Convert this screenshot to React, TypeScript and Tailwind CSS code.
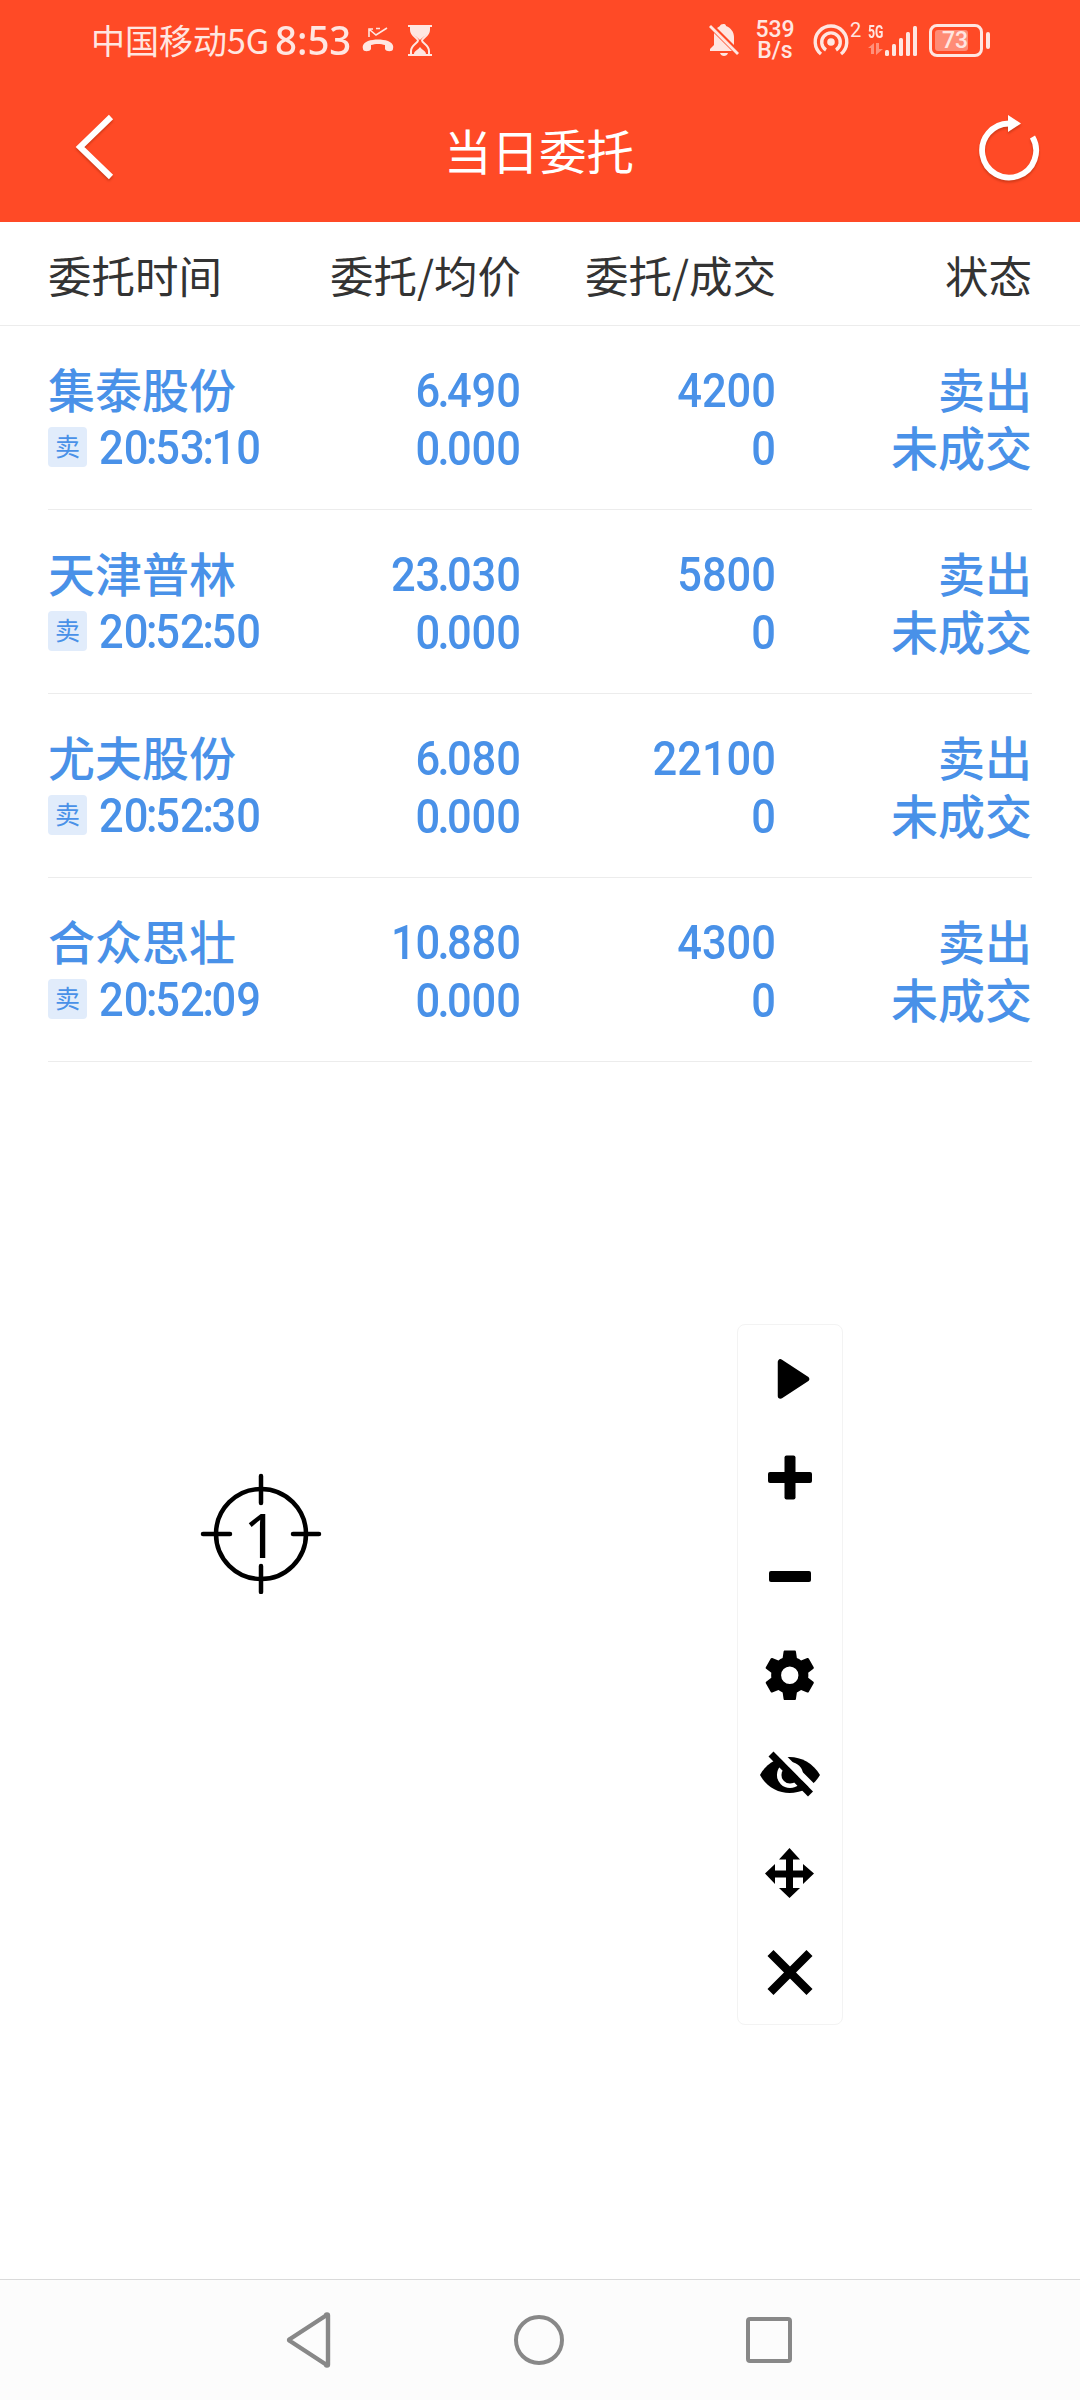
import React from "react";

type Order = { name: string; time: string; price: string; avg: string; qty: string };

const orders: Order[] = [
  { name: "集泰股份", time: "20:53:10", price: "6.490", avg: "0.000", qty: "4200" },
  { name: "天津普林", time: "20:52:50", price: "23.030", avg: "0.000", qty: "5800" },
  { name: "尤夫股份", time: "20:52:30", price: "6.080", avg: "0.000", qty: "22100" },
  { name: "合众思壮", time: "20:52:09", price: "10.880", avg: "0.000", qty: "4300" },
];

function StatusBar() {
  return (
    <div className="flex h-20 items-center pl-[91px] pr-[90px] text-[#ffe6e1]">
      <span className="w-[184px] whitespace-nowrap text-[34px] leading-[78px]">中国移动5G</span>
      <span className="w-[77px] origin-left scale-x-[0.960] whitespace-nowrap font-['Noto_Sans','Noto_Sans_CJK_SC',sans-serif] text-[40px] font-medium leading-[80px]">8:53</span>
      <svg className="ml-[10px] h-[26px] w-8" viewBox="0 0 32 26" fill="none" stroke="currentColor">
        <path d="M7 10V2h4M8 3l6 5L25 1M14 1.500h4" strokeWidth="1.600" />
        <path d="M1 22c-1-4 1-6 5-8 6-2 14-2 20 0 4 2 6 4 5 8 0 3-7 3-8 0v-4c-4-1.500-10-1.500-14 0v4c-1 3-8 3-8 0Z" fill="currentColor" stroke="none" />
      </svg>
      <svg className="ml-[14px] h-[31px] w-6" viewBox="0 0 24 31" fill="none" stroke="currentColor" strokeWidth="2">
        <path d="M0 1h24M0 30h24" />
        <path d="M3 1v4c0 6 7 8 7 10.500S3 20 3 26v4M21 1v4c0 6-7 8-7 10.500S21 20 21 26v4" />
        <path d="M3 2h18v3c0 5-7 7-9 10C10 12 3 10 3 5ZM6 29c0-3 4-4 6-7 2 3 6 4 6 7Z" fill="currentColor" stroke="none" />
      </svg>
      <div className="flex-1" />
      <svg className="h-[32px] w-[30px]" viewBox="0 0 30 32" fill="currentColor">
        <path d="M5 9 23 27H1v-2l4-4ZM8 4l3-2c0-2 6-3 6 0 5 2 8 6 8 11v8ZM11 29h8c-1 4-7 4-8 0Z" />
        <path d="M1 2 29 30" stroke="currentColor" strokeWidth="2.800" />
      </svg>
      <div className="ml-[15px] flex w-[42px] flex-col items-center whitespace-nowrap font-[Roboto] text-[23px] font-medium leading-none">
        <span className="h-[21px] leading-[21px]">539</span>
        <span className="h-[21px] leading-[21px]">B/s</span>
      </div>
      <svg className="ml-[17px] h-[32px] w-[36px]" viewBox="0 0 36 32" fill="none" stroke="currentColor" strokeWidth="3.400">
        <circle cx="18" cy="18" r="3.800" fill="currentColor" stroke="none" />
        <path d="M8 30A15.800 15.800 0 1 1 28 30" />
        <path d="M13 26a9.300 9.300 0 1 1 10 0" />
      </svg>
      <span className="mb-[20px] ml-[1px] w-[12px] font-[Roboto] text-[20px] leading-[20px]">2</span>
      <div className="ml-[6px] flex h-[34px] w-[50px]">
        <div className="w-[16px]">
          <div className="h-[17px] w-[24px] origin-left scale-x-[0.680] whitespace-nowrap font-[Roboto] text-[18px] font-bold leading-[17px]">5G</div>
          <svg className="h-[17px] w-[16px] opacity-45" viewBox="0 0 16 17" fill="currentColor">
            <path d="M0 8l6-5v11H3V8ZM8 3h3v6h4l-7 6Z" />
          </svg>
        </div>
        <svg className="h-[34px] w-[34px]" viewBox="16 0 34 34" fill="currentColor">
          <rect x="17" y="27" width="4" height="6" rx="1.500" />
          <rect x="24" y="21" width="4" height="12" rx="1.500" />
          <rect x="31" y="15" width="4" height="18" rx="1.500" />
          <rect x="38" y="9" width="4" height="24" rx="1.500" />
          <rect x="45" y="3" width="4" height="30" rx="1.500" />
        </svg>
      </div>
      <div className="ml-[11px] flex h-[33px] w-[54px] items-center rounded-[8px] border-[3px] border-current p-[3px]">
        <div className="flex h-[21px] w-[33px] items-center rounded-[3px] bg-[#ff8c76]">
          <span className="pl-[7px] font-[Roboto] text-[23px] font-medium leading-none">73</span>
        </div>
      </div>
      <div className="ml-[3px] h-[17px] w-[4px] rounded-full bg-current" />
    </div>
  );
}

function TitleBar() {
  return (
    <div className="flex h-[142px] items-center justify-between pl-[74px] pr-[38px] text-white">
      <svg className="mb-[8px] h-[68px] w-[42px] drop-shadow-[0_2px_1px_rgba(120,30,0,0.35)]" viewBox="0 0 42 68" fill="none" stroke="currentColor" strokeWidth="6">
        <path d="M37 4 6 34 37 64" />
      </svg>
      <h1 className="-ml-[14px] mb-[2px] text-[47.500px] leading-[70px]">当日委托</h1>
      <svg className="mb-[8px] h-[68px] w-[66px] drop-shadow-[0_2px_1px_rgba(120,30,0,0.35)]" viewBox="0 0 66 68" fill="none" stroke="currentColor" strokeWidth="5.800">
        <path d="M33 10.500A27 27 0 1 0 56.500 24" />
        <path d="M32 2 45 10.500 32 19Z" fill="currentColor" stroke="none" />
      </svg>
    </div>
  );
}

/* Digits with tightly set separators. */
function Digits({ text }: { text: string }) {
  return (
    <>
      {text.split(/([.:])/).map((part, i) =>
        part === "." ? (
          <span key={i} className="-mx-[3px]">.</span>
        ) : part === ":" ? (
          <span key={i} className="-mx-[2.500px]">:</span>
        ) : (
          part
        ),
      )}
    </>
  );
}

function Num({ children }: { children: string }) {
  return (
    <span className="block h-[58px] origin-right scale-x-[0.905] font-[Roboto] text-[48px] font-medium leading-[60px]">
      <Digits text={children} />
    </span>
  );
}

function OrderRow({ o }: { o: Order }) {
  return (
    <div className="mx-12 grid h-[184px] grid-cols-[230px_243px_255px_256px] border-b border-[#ececec] pt-[35px] text-[47px] font-medium text-[#4991e8]">
      <div>
        <div className="h-[58px] leading-[54px]">{o.name}</div>
        <div className="flex h-[58px] items-center">
          <span className="mb-[2px] h-10 w-[39px] shrink-0 rounded-[4px] bg-[#e1ecfb] text-center text-[25px] font-normal leading-[37px]">卖</span>
          <span className="ml-[12px] shrink-0 origin-left scale-x-[0.905] whitespace-nowrap font-[Roboto] text-[48px] leading-[58px]">
            <Digits text={o.time} />
          </span>
        </div>
      </div>
      <div className="text-right">
        <Num>{o.price}</Num>
        <Num>{o.avg}</Num>
      </div>
      <div className="text-right">
        <Num>{o.qty}</Num>
        <Num>0</Num>
      </div>
      <div className="text-right leading-[54px]">
        <div className="h-[58px]">卖出</div>
        <div className="h-[58px]">未成交</div>
      </div>
    </div>
  );
}

function Target() {
  return (
    <div className="absolute left-[200px] top-[1472px] flex h-[122px] w-[122px] items-center justify-center">
      <svg className="absolute inset-0" viewBox="0 0 122 122" fill="none" stroke="#000" strokeWidth="4.500" strokeLinecap="round">
        <circle cx="61" cy="62" r="45" />
        <path d="M61 4v27M61 94v26M3 62h27M93 62h26" />
      </svg>
      <span className="relative top-[1px] font-['Noto_Sans'] text-[62px] leading-none text-black">1</span>
    </div>
  );
}

function Toolbar() {
  const cell = "h-[99px] w-[104px]";
  return (
    <div className="absolute left-[737px] top-[1324px] flex h-[701px] w-[106px] flex-col rounded-[8px] border border-[#f3f3f3] bg-white pt-[3px]">
      <svg className={cell} viewBox="0 0 104 99">
        <path d="M42.500 34v34l26-17Z" stroke="#000" strokeWidth="5.500" strokeLinejoin="round" />
      </svg>
      <svg className={cell} viewBox="0 0 104 99">
        <rect x="30" y="45" width="44" height="11" rx="2" />
        <rect x="46.500" y="28.500" width="11" height="44" rx="2" />
      </svg>
      <svg className={cell} viewBox="0 0 104 99">
        <rect x="31" y="45" width="42" height="11" rx="2" />
      </svg>
      <svg className={cell} viewBox="0 0 104 99">
        <path
          transform="translate(22 20.500) scale(2.480)"
          d="M19.430 12.980c.04-.32.07-.64.07-.98s-.03-.66-.07-.98l2.110-1.650c.19-.15.24-.42.12-.64l-2-3.460c-.12-.22-.39-.3-.61-.22l-2.490 1c-.52-.4-1.080-.73-1.690-.98l-.38-2.650C14.460 2.180 14.250 2 14 2h-4c-.25 0-.46.18-.49.42l-.38 2.650c-.61.25-1.170.59-1.690.98l-2.490-1c-.23-.09-.49 0-.61.22l-2 3.460c-.13.22-.07.49.12.64l2.110 1.650c-.04.32-.07.65-.07.98s.03.66.07.98l-2.110 1.650c-.19.15-.24.42-.12.64l2 3.460c.12.22.39.3.61.22l2.490-1c.52.4 1.080.73 1.690.98l.38 2.650c.03.24.24.42.49.42h4c.25 0 .46-.18.49-.42l.38-2.650c.61-.25 1.170-.59 1.690-.98l2.490 1c.23.09.49 0 .61-.22l2-3.460c.12-.22.07-.49-.12-.64ZM12 15.500a3.500 3.500 0 1 1 0-7 3.500 3.500 0 0 1 0 7Z"
        />
      </svg>
      <svg className={cell} viewBox="0 0 104 99" fill="none">
        <path d="M22 51C35 27 68 27 82 51 68 75 35 75 22 51Z" fill="#000" />
        <circle cx="52" cy="51" r="10.800" stroke="#fff" strokeWidth="4.500" />
        <path d="M38 26 79 67" stroke="#fff" strokeWidth="6.500" />
        <path d="M33 30 72.500 70" stroke="#000" strokeWidth="7" />
      </svg>
      <svg className={cell} viewBox="0 0 104 99">
        <path d="M51.500 25 62 36.500h-7v11h10V41L76 50.500 65 61v-6.500H55V65h7L51.500 75 41 65h7V54.500H37V61L27 50.500 37 41v6.500h11v-11h-7Z" />
      </svg>
      <svg className={cell} viewBox="0 0 104 99">
        <path d="M35.500 34 68.500 67M68.500 34 35.500 67" stroke="#000" strokeWidth="8.500" strokeLinecap="square" />
      </svg>
    </div>
  );
}

function NavBar() {
  return (
    <div className="flex h-[121px] items-center justify-between border-t border-[#dadada] bg-[#fcfcfc] pl-[286px] pr-[288px]">
      <svg className="h-[58px] w-[46px]" viewBox="0 0 46 58" fill="none" stroke="#888" strokeWidth="4.400" strokeLinejoin="round">
        <path d="M42 4.500v49a1 1 0 0 1-2 0L4 30q-2-1 0-2L40 4.500a1 1 0 0 1 2 0Z" />
      </svg>
      <div className="h-[50px] w-[50px] rounded-full border-[4px] border-[#888]" />
      <div className="h-[46px] w-[46px] rounded-[4px] border-[4px] border-[#888]" />
    </div>
  );
}

export default function App() {
  return (
    <div className="relative flex h-[2400px] w-[1080px] flex-col overflow-hidden bg-white font-['Noto_Sans_CJK_SC',sans-serif]">
      <header className="bg-[#ff4a26]">
        <StatusBar />
        <TitleBar />
      </header>
      <div className="grid h-[104px] grid-cols-[230px_243px_255px_256px] border-b border-[#ececec] px-12 text-right text-[43.500px] leading-[106px] text-[#333]">
        <span className="text-left">委托时间</span>
        <span>委托/均价</span>
        <span>委托/成交</span>
        <span>状态</span>
      </div>
      <main className="flex-1">
        {orders.map((o) => (
          <OrderRow key={o.time} o={o} />
        ))}
      </main>
      <NavBar />
      <Target />
      <Toolbar />
    </div>
  );
}
